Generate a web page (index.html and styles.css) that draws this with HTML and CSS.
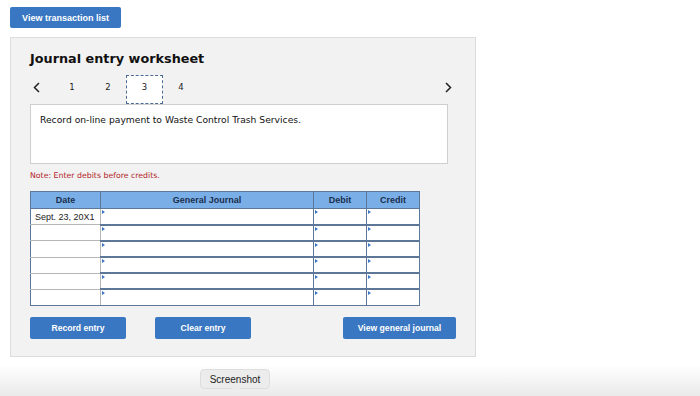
FILE: index.html
```html
<!DOCTYPE html>
<html>
<head>
<meta charset="utf-8">
<link rel="stylesheet" href="styles.css">
</head>
<body>
<div class="page">
  <button class="btn btn-top">View transaction list</button>
  <div class="panel">
    <h1 class="title">Journal entry worksheet</h1>
    <div class="tabs">
      <span class="arrow"><svg width="7" height="11" viewBox="0 0 7 11"><polyline points="6,1 1.5,5.5 6,10" fill="none" stroke="#222" stroke-width="1.5"/></svg></span>
      <span class="tab">1</span>
      <span class="tab">2</span>
      <span class="tab active">3</span>
      <span class="tab">4</span>
      <span class="arrow arrow-right"><svg width="7" height="11" viewBox="0 0 7 11"><polyline points="1,1 5.5,5.5 1,10" fill="none" stroke="#222" stroke-width="1.5"/></svg></span>
    </div>
    <div class="desc">Record on-line payment to Waste Control Trash Services.</div>
    <div class="note">Note: Enter debits before credits.</div>
    <table class="journal">
      <thead>
        <tr><th class="c-date">Date</th><th class="c-gj">General Journal</th><th class="c-num">Debit</th><th class="c-num">Credit</th></tr>
      </thead>
      <tbody>
        <tr><td class="d">Sept. 23, 20X1</td><td class="in"></td><td class="in"></td><td class="in"></td></tr>
        <tr><td class="d"></td><td class="in"></td><td class="in"></td><td class="in"></td></tr>
        <tr><td class="d"></td><td class="in"></td><td class="in"></td><td class="in"></td></tr>
        <tr><td class="d"></td><td class="in"></td><td class="in"></td><td class="in"></td></tr>
        <tr><td class="d"></td><td class="in"></td><td class="in"></td><td class="in"></td></tr>
        <tr><td class="d"></td><td class="in"></td><td class="in"></td><td class="in"></td></tr>
      </tbody>
    </table>
    <div class="actions">
      <button class="btn btn-act">Record entry</button>
      <button class="btn btn-act">Clear entry</button>
      <button class="btn btn-view">View general journal</button>
    </div>
  </div>
</div>
<div class="dock">
  <div class="tip">Screenshot</div>
</div>
</body>
</html>
```
FILE: styles.css
```css
* { box-sizing: border-box; }
html, body { margin: 0; padding: 0; background: #fff; }
body { width: 700px; height: 396px; overflow: hidden; font-family: "DejaVu Sans", Verdana, sans-serif; color: #222; }
.page { padding: 7px 0 0 10px; }
.btn {
  background: #3a77c2; color: #fff; border: 0; border-radius: 2px;
  font-family: "Liberation Sans", Arial, sans-serif; font-weight: bold; font-size: 8.6px;
  padding: 0; cursor: pointer;
}
.btn-top { width: 111px; height: 21px; display: block; font-size: 9px; }
.panel {
  margin-top: 9px; width: 466px; height: 320px;
  background: #f2f2f2; border: 1px solid #dcdcdc;
  padding: 0 19px 0 19px;
}
.title { margin: 12px 0 0 0; font-size: 12.8px; font-weight: bold; color: #111; line-height: 18px; }
.tabs { display: flex; align-items: center; height: 29px; margin-top: 7px; font-size: 8.5px; }
.arrow { width: 24px; padding-left: 3px; padding-bottom: 5px; display: flex; align-items: center; height: 29px; }
.arrow-right { margin-left: auto; width: auto; padding: 0 4px 5px 0; }
.tab { width: 36px; height: 29px; display: flex; align-items: center; justify-content: center; padding-bottom: 5px; }
.tab.active { background: #fff; border: 1px dashed #4a6a94; width: 37px; }
.desc {
  width: 418px; height: 60px; background: #fff; border: 1px solid #cfcfcf;
  padding: 9px 9px; font-size: 9.2px; line-height: 12px; color: #111;
}
.note { color: #b3262a; font-size: 7.8px; margin-top: 7px; height: 20px; line-height: 10px; }
.journal { border-collapse: collapse; font-family: "Liberation Sans", Arial, sans-serif; }
.journal th {
  background: #7aaee6; color: #1a2f4e; font-size: 9px; font-weight: bold;
  height: 17px; padding: 0; border: 1.5px solid #5d7799;
}
.c-date { width: 70px; }
.c-gj { width: 213px; }
.c-num { width: 53px; }
.journal td { height: 16.2px; padding: 0; background: #fff; }
.journal td.d { border: 1px solid #b5b5b5; border-left: 1.5px solid #5d7799; font-size: 9px; padding-left: 4px; color: #222; }
.journal td.in { border: 1.5px solid #5d7799; border-bottom-width: 2px; position: relative; }
.journal td.in::before {
  content: ""; position: absolute; left: 1px; top: 1px;
  border-left: 3px solid #3a77c2; border-top: 2px solid transparent; border-bottom: 2px solid transparent;
}
.journal tbody tr:last-child td { border-bottom: 1.5px solid #5d7799; }
.actions { display: flex; margin-top: 11px; gap: 29px; }
.btn-act { width: 96px; height: 22px; }
.btn-view { width: 113px; height: 22px; margin-left: auto; }
.dock {
  margin-top: 8px; height: 32px;
  background: linear-gradient(#ffffff, #e9e9e9);
  padding: 4px 0 0 200px;
}
.tip {
  position: relative; width: 70px; height: 20px; border-radius: 4px;
  background: #ececec; border: 1px solid #dedede;
  font-family: "Liberation Sans", Arial, sans-serif; font-size: 10px; color: #222;
  display: flex; align-items: center; justify-content: center;
}
.tip::after {
  content: ""; position: absolute; left: 31px; bottom: -5px;
  border-top: 5px solid #ececec; border-left: 4px solid transparent; border-right: 4px solid transparent;
}
```
